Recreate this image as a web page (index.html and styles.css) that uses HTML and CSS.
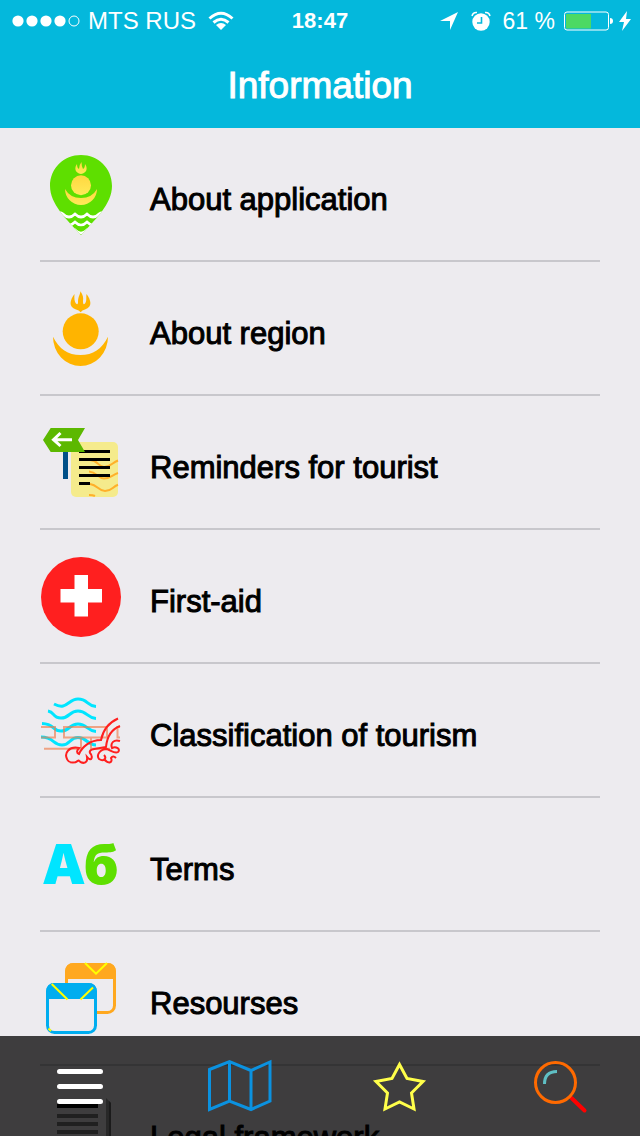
FILE: index.html
```html
<!DOCTYPE html>
<html lang="en">
 <head>
  <meta charset="utf-8"/>
  <title>Information</title>
  <meta name="viewport" content="width=device-width, initial-scale=1.0"/>
  <link rel="stylesheet" href="styles.css">
 </head>
 <body>
	<header>
		<div class="status">
			<div class="status-left">
				<svg width="68" height="14" viewBox="0 0 68 14" fill="#fff">
					<circle cx="6" cy="7" r="5.6"/><circle cx="20" cy="7" r="5.6"/><circle cx="34" cy="7" r="5.6"/><circle cx="48" cy="7" r="5.6"/>
					<circle cx="62" cy="7" r="5" fill="none" stroke="#fff"/>
				</svg>
				<span class="carrier">MTS RUS</span>
				<svg class="wifi" width="26" height="20" viewBox="0 0 26 20" fill="none" stroke="#fff" stroke-width="3">
					<path d="M1.500 7.500Q13-3 24.500 7.500M5.500 11.500Q13 5 20.500 11.500"/>
					<path d="M8 14Q13 10 18 14L13 19Z" fill="#fff" stroke="none"/>
				</svg>
			</div>
			<span class="time">18:47</span>
			<div class="status-right">
				<svg width="20" height="20" viewBox="0 0 20 20" fill="#fff"><path d="M19 1L11 19V10H1Z"/></svg>
				<svg class="alarm" width="20" height="20" viewBox="0 0 20 20">
					<circle cx="10" cy="11" r="8.700" fill="#fff"/>
					<path d="M1 5Q2 1 6 1.500M19 5Q18 1 14 1.500" fill="none" stroke="#fff" stroke-width="1.500"/>
					<path d="M10.500 6V12H6" fill="none" stroke="#04b8dc" stroke-width="1.600"/>
				</svg>
				<span class="percent">61 %</span>
				<svg width="49" height="20" viewBox="0 0 49 20">
					<rect x=".5" y="1" width="44" height="18" rx="2.500" fill="none" stroke="#fff"/>
					<rect x="2" y="3" width="25" height="14.500" fill="#4cd964"/>
					<path d="M46 7Q49 7 49 10Q49 13 46 13Z" fill="#fff"/>
				</svg>
				<svg width="12" height="20" viewBox="0 0 12 20" fill="#fff"><path d="M8 0L0 11H5L3 20L12 8H7Z"/></svg>
			</div>
		</div>
		<h1>Information</h1>
	</header>

	<main>
		<ul class="list">
			<li>
				<a href="#about-app">
					<svg class="icon" viewBox="0 0 82 80">
						<defs>
							<clipPath id="pin"><path d="M41 0C58 0 72 13 72 31C72 49 55 65 41 80C27 65 10 49 10 31C10 13 24 0 41 0Z"/></clipPath>
							<linearGradient id="gold" x1="0" y1="0" x2="0" y2="1"><stop offset="0" stop-color="#ffd740"/><stop offset="1" stop-color="#ffea58"/></linearGradient>
						</defs>
						<g clip-path="url(#pin)">
							<rect width="82" height="80" fill="#5edf00"/>
							<path d="M17 58Q21 57 23 59Q29 65 35 59Q41 65 47 59Q53 65 59 59Q61 57 65 58M23 67Q29 73 35 67Q41 73 47 67Q53 73 59 67M29 75Q32 78 35 75Q41 81 47 75Q50 78 53 75" fill="none" stroke="#fff" stroke-width="2.600"/>
						</g>
						<circle cx="41" cy="30.300" r="10" fill="url(#gold)"/>
						<path d="M25 34A16 16 0 0 0 57 34Q52 43 41 43Q30 43 25 34Z" fill="url(#gold)"/>
						<path d="M41 19C35 18 34 13 37 9Q37 13 39 14Q39 10 41.500 7Q41.500 11 43 14Q45 13 45 9C48 13 47 18 41 19Z" fill="url(#gold)"/>
					</svg>
					<span>About application</span>
				</a>
			</li>
			<li>
				<a href="#about-region">
					<svg class="icon" viewBox="0 0 82 80" fill="#ffb400">
						<circle cx="40.700" cy="42.300" r="18"/>
						<path d="M13 47.700A27.500 29.300 0 0 0 68 47.700C62 60 53 66 40.500 66C28 66 19 60 13 47.700Z"/>
						<path d="M40.700 23.300Q39 21 36 20.500C28 18 30 11 34.500 5C34 9 34.500 13 36 14.500C37.500 16 38 15 38 13C38 8 40 6 40.500 2.300C43 6 43.500 9 43 12C43 15 43.500 16 45 14.500C47 12 46 9 46.500 5C51 11 53 18 45 20.500Q42 21 40.700 23.300Z"/>
					</svg>
					<span>About region</span>
				</a>
			</li>
			<li>
				<a href="#reminders">
					<svg class="icon" viewBox="0 0 82 80">
						<rect x="31" y="19" width="47" height="55" rx="5" fill="#f5eb8c"/>
						<path d="M50 37C58 37 58 44 64 44S72 40 78 37.500M49 48.500C57 49 58 55.500 64 55.500S72 52 78 50M50 61C58 62 58 68 65 68S72 64 78 61.700M49 72Q53 72 55 73" fill="none" stroke="#ffb02a" stroke-width="2"/>
						<path d="M39 28.500H70M39 36.500H70M39 44.500H70M39 52.500H70M39 60.500H50" stroke="#000" stroke-width="3"/>
						<path d="M23 27H28V56H23Z" fill="#004f88"/>
						<path d="M3 17L10.700 5H45L38 17L45 29H10.700Z" fill="#5cb800"/>
						<path d="M32 16.700H14M20.500 10L13.500 16.700L20.500 23" fill="none" stroke="#fff" stroke-width="3"/>
					</svg>
					<span>Reminders for tourist</span>
				</a>
			</li>
			<li>
				<a href="#first-aid">
					<svg class="icon" viewBox="0 0 82 80">
						<circle cx="41" cy="40" r="40" fill="#ff1f1f"/>
						<path d="M34.500 18H48V32H62V45.500H48V59.500H34.500V45.500H20.500V32H34.500Z" fill="#fff"/>
					</svg>
					<span>First-aid</span>
				</a>
			</li>
			<li>
				<a href="#classification">
					<svg class="icon" viewBox="0 0 82 80" fill="none">
						<path d="M14 13C27 20 28 8 38 8S47 15 56 15.500M8 20C15 21 12 27 21 27S29 20 38 20S47 27 56 27.500M2 32.500C15 33 12 40 21 40S29 33 38 33S47 40 56 40.500M1 46C14 46 13 54 22 54S29 46.500 38 46.500S47 54 56 54" stroke="#00e5ff" stroke-width="3"/>
						<path d="M1 36H15V46.500H1M24 36H67V46.500H24ZM80 36H77.500V46.500H80M4 57.700H41V47M51 47V57.700H70" stroke="#ee7d4c" stroke-opacity=".65" stroke-width="2"/>
						<path d="M78 27.500C68 32 63 39 61 49C50 49 42 56 39 63C36 62 37 59 39 57C29 55 24 62 27 68C29 73 37 72 38 69M38 69C43 74 48 72 47 66C52 72 53 65 50 62C48 57 58 58 66 56C67 46 72 38 80 35M80 50C74 48 70 52 72 57C76 55 81 58 78 61C75 63 72 60 67 58C60 58 56 64 59 68C64 71 67 67 64 64M64 68C69 74 73 71 71 67Q73 64 76 67" stroke="#ff1f1f" stroke-width="2"/>
					</svg>
					<span>Classification of tourism</span>
				</a>
			</li>
			<li>
				<a href="#terms">
					<svg class="icon letters" viewBox="0 0 82 80">
						<text x="2" y="59" fill="#00e5ff">А</text>
						<text x="44" y="59" fill="#5edf00">б</text>
					</svg>
					<span>Terms</span>
				</a>
			</li>
			<li>
				<a href="#resourses">
					<svg class="icon" viewBox="0 0 82 80">
						<rect x="26.500" y="5.500" width="48" height="48" rx="7" fill="#edebef" stroke="#ffa81f" stroke-width="3"/>
						<path d="M25 20V13Q25 4 34 4H67Q76 4 76 13V20Z" fill="#ffa81f"/>
						<path d="M45 4L56 14.700L67 4" fill="none" stroke="#ff0" stroke-width="2"/>
						<rect x="7.500" y="25.500" width="48" height="48" rx="7" fill="#edebef" stroke="#00adef" stroke-width="3"/>
						<path d="M6 40V33Q6 24 15 24H48Q57 24 57 33V40Z" fill="#00adef"/>
						<path d="M11.700 25L27.500 40.500M40.500 40.500L53 28.500M8.500 69.500L11 72" stroke="#ff0" stroke-width="2"/>
					</svg>
					<span>Resourses</span>
				</a>
			</li>
			<li>
				<a href="#legal">
					<svg class="icon" viewBox="0 0 82 80">
						<path d="M66 5L71 10V76H66Z" fill="#999"/>
						<path d="M69 8L71 10V76H69Z" fill="#6a6a6a"/>
						<path d="M17 11H58V15H17Z"/>
						<path d="M17 23H58M17 31H58M17 39H58M17 47H58" stroke="#7d7d7d" stroke-width="4"/>
					</svg>
					<span>Legal framework</span>
				</a>
			</li>
		</ul>
	</main>

	<nav class="tabs">
		<a href="#menu" aria-label="Menu">
			<svg viewBox="0 0 80 80" stroke="#fff" stroke-width="5" stroke-linecap="round"><path d="M19.500 25.500H60.500M19.500 40.500H60.500M19.500 55.500H60.500"/></svg>
		</a>
		<a href="#map" aria-label="Map">
			<svg viewBox="0 0 80 80" fill="none" stroke="#0b92e0" stroke-width="3"><path d="M9.500 23.500L29.500 15.500L51 24.500L70 16V55L51 63.500L29.500 55L9.500 63.500ZM29.500 15.500V55M51 24.500V63.500"/></svg>
		</a>
		<a href="#favorites" aria-label="Favorites">
			<svg viewBox="0 0 80 80" fill="none" stroke="#ffff4a" stroke-width="3"><path d="M39.500 18.500L47 32.500L63 35.500L51.500 47L54 63L39.500 56L25 63L27.500 47L16 35.500L32 32.500Z"/></svg>
		</a>
		<a href="#search" aria-label="Search">
			<svg viewBox="0 0 80 80" fill="none" stroke-width="3">
				<path d="M51.500 52L64.500 64.500" stroke="#f00" stroke-width="4" stroke-linecap="round"/>
				<circle cx="35.500" cy="36.500" r="20" stroke="#ff6a00"/>
				<path d="M24.500 38Q24.500 25.500 37 25.500" stroke="#5fbfc4"/>
			</svg>
		</a>
	</nav>
 </body>
</html>
```
FILE: styles.css
```css
*{margin:0; padding:0; box-sizing:border-box;}
body{
	position:relative; display:flex; flex-direction:column; height:100vh; overflow:hidden;
	background-color:#edebef; color:#000;
	font-family:"Liberation Sans", Arial, sans-serif;
}
li{list-style:none;}
a{color:inherit; text-decoration:none;}
svg{display:block; flex:none;}

header{background-color:#04b8dc; color:#fff;}
	.status{display:grid; grid-template-columns:1fr auto 1fr; align-items:center; height:40px; padding:0 9px;}
		.status-left,
		.status-right{display:flex; align-items:center;}
		.status-left{gap:8px; padding-left:3px;}
		.status-right{gap:6px; justify-content:flex-end;}
		.carrier{font-size:24px; line-height:42px;}
		.wifi{margin-left:4px;}
		.time{font-size:22px; line-height:42px; font-weight:bold;}
		.alarm{margin-left:6px;}
		.percent{font-size:23px; line-height:42px; margin:0 3px 0 6px;}
	header h1{
		height:88px; font-size:37px; line-height:92px; font-weight:normal; text-align:center;
		-webkit-text-stroke:1px #fff;
	}

main{flex:1; overflow-y:auto; scrollbar-width:none;}
	.list{padding:0 40px 100px;}
		.list li{border-bottom:2px solid #c8c7cc;}
		.list a{display:flex; gap:28px; padding:27px 0 25px;}
			.icon{width:82px; height:80px;}
			.letters{font-family:Inter, sans-serif; font-size:55px; font-weight:900;}
			.list span{font-size:31px; line-height:90px; height:80px; -webkit-text-stroke:1px #000;}

/* translucent bar, the list scrolls under it */
.tabs{
	position:absolute; left:0; right:0; bottom:0;
	display:flex; align-items:center; height:100px;
	background-color:rgba(0,0,0,.74);
}
	.tabs a{flex:1; display:flex; justify-content:center;}
	.tabs svg{width:80px; height:80px;}
```
